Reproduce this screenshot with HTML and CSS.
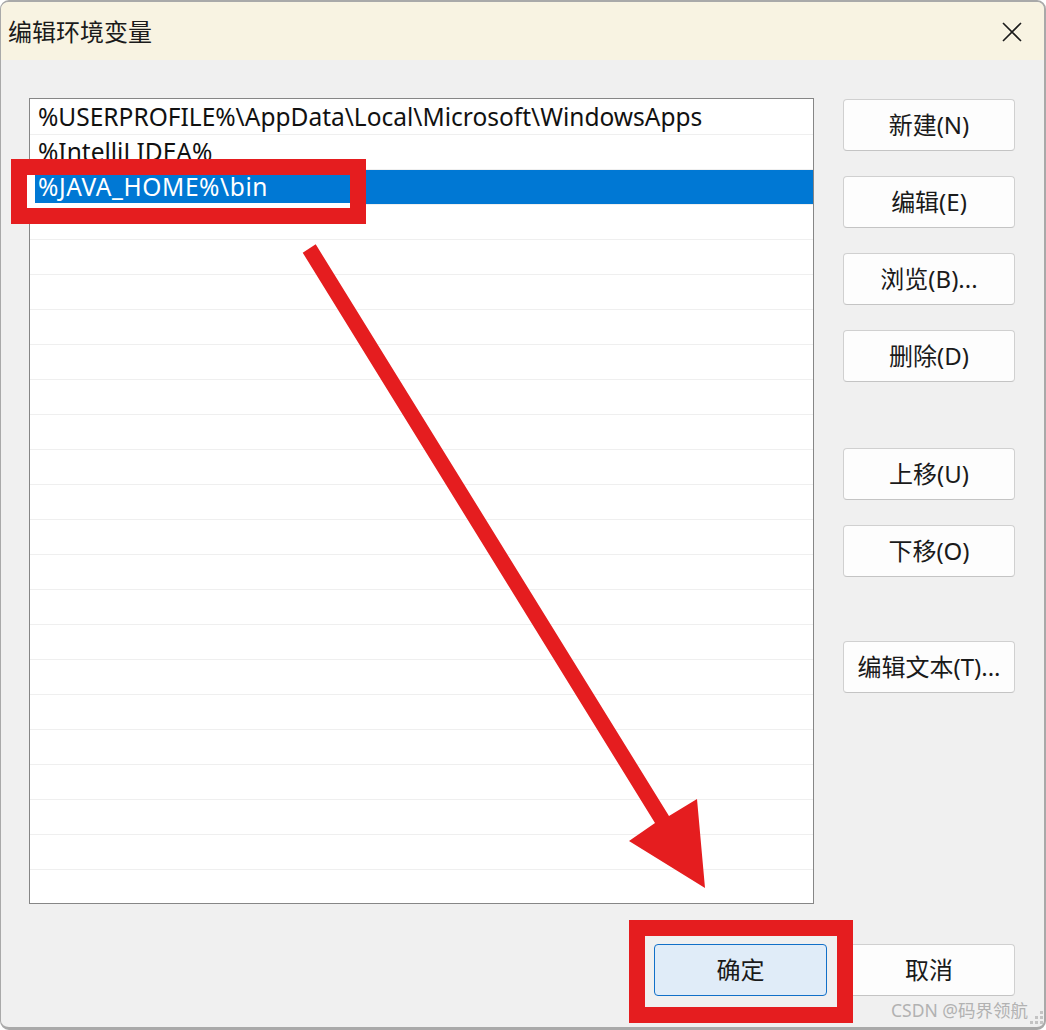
FILE: index.html
```html
<!DOCTYPE html>
<html lang="zh-CN">
<head>
<meta charset="utf-8">
<title>编辑环境变量</title>
<link rel="stylesheet" href="styles.css">
</head>
<body>
<div class="window">
  <div class="titlebar">
    <span class="title">编辑环境变量</span>
    <span class="close">
      <svg width="20" height="20" viewBox="0 0 20 20"><path d="M1 1L19 19M19 1L1 19" stroke="#1b1b1b" stroke-width="1.6" fill="none"/></svg>
    </span>
  </div>
  <div class="content">
    <div class="main">
      <div class="list">
        <div class="row">%USERPROFILE%\AppData\Local\Microsoft\WindowsApps</div>
        <div class="row">%IntelliJ IDEA%</div>
        <div class="row selected"><span class="sel-text">%JAVA_HOME%\bin</span></div>
        <div class="row"></div><div class="row"></div><div class="row"></div><div class="row"></div>
        <div class="row"></div><div class="row"></div><div class="row"></div><div class="row"></div>
        <div class="row"></div><div class="row"></div><div class="row"></div><div class="row"></div>
        <div class="row"></div><div class="row"></div><div class="row"></div><div class="row"></div>
        <div class="row"></div><div class="row"></div><div class="row"></div><div class="row last"></div>
      </div>
      <div class="side">
        <button class="btn">新建(N)</button>
        <button class="btn">编辑(E)</button>
        <button class="btn">浏览(B)...</button>
        <button class="btn">删除(D)</button>
        <button class="btn group">上移(U)</button>
        <button class="btn">下移(O)</button>
        <button class="btn group2">编辑文本(T)...</button>
      </div>
    </div>
    <div class="footer">
      <button class="btn primary">确定</button>
      <button class="btn">取消</button>
    </div>
  </div>

  <div class="mark mark-row"></div>
  <div class="mark mark-ok"></div>
  <svg class="arrow" width="1046" height="1030" viewBox="0 0 1046 1030">
    <polygon points="302.7,252.7 315.7,244.3 669,816 697,799 705,888 629,841 655,823" fill="#e51d1f"/>
  </svg>
  <div class="watermark">CSDN @码界领航</div>
  <svg class="grip" width="16" height="16" viewBox="0 0 16 16">
    <rect x="12" y="2" width="3" height="3" fill="#c4c4c4"/>
    <rect x="12" y="7" width="3" height="3" fill="#c4c4c4"/>
    <rect x="7" y="7" width="3" height="3" fill="#c4c4c4"/>
    <rect x="12" y="12" width="3" height="3" fill="#c4c4c4"/>
    <rect x="7" y="12" width="3" height="3" fill="#c4c4c4"/>
    <rect x="2" y="12" width="3" height="3" fill="#c4c4c4"/>
  </svg>
</div>
</body>
</html>
```

FILE: styles.css
```css
* { box-sizing: border-box; }
html, body { margin: 0; padding: 0; background: #ffffff; }
body {
  width: 1046px;
  height: 1030px;
  overflow: hidden;
  font-family: "Noto Sans", "Noto Sans CJK SC", sans-serif;
  color: #1a1a1a;
}
.window {
  position: relative;
  width: 1046px;
  height: 1030px;
  background: #f0f0f0;
  border-style: solid;
  border-color: #a9a9a9;
  border-width: 2px 2px 3px 1px;
  border-radius: 9px;
  overflow: hidden;
}
.titlebar {
  height: 58px;
  background: #f8f3e2;
  display: flex;
  align-items: center;
  justify-content: space-between;
  padding: 0 22px 0 7px;
}
.title {
  font-family: "Noto Sans CJK SC", sans-serif;
  font-size: 24px;
  line-height: 30px;
  color: #1b1b1b;
}
.close { display: flex; width: 20px; height: 20px; margin-top: 2px; }
.content { padding: 38px 29px 0 28px; }
.main { display: flex; gap: 29px; align-items: flex-start; }
.list {
  width: 785px;
  height: 806px;
  background: #ffffff;
  border: 1px solid #868686;
  padding-top: 1px;
  overflow: hidden;
}
.row {
  height: 35px;
  border-bottom: 1px solid #efefef;
  padding-left: 8px;
  font-size: 24.5px;
  line-height: 34px;
  white-space: nowrap;
  color: #111111;
}
.row.last { border-bottom: 0; }
.row.selected {
  background: #0078d4;
  margin-left: 5px;
  padding-left: 3px;
  color: #ffffff;
  letter-spacing: 0.6px;
}
.side {
  width: 172px;
  padding-top: 1px;
  display: flex;
  flex-direction: column;
  gap: 25px;
}
.btn {
  height: 52px;
  width: 172px;
  background: #fdfdfd;
  border: 1px solid #d0d0d0;
  border-bottom-color: #c4c4c4;
  border-radius: 4px;
  font-family: "Noto Sans", "Noto Sans CJK SC", sans-serif;
  font-size: 24px;
  color: #1a1a1a;
  padding: 0;
  line-height: 48px;
}
.btn.group { margin-top: 41px; }
.btn.group2 { margin-top: 39px; }
.footer {
  margin-top: 40px;
  display: flex;
  justify-content: flex-end;
  gap: 16px;
}
.btn.primary {
  width: 173px;
  background: #e0ecf8;
  border-color: #1270c8;
}
.mark {
  position: absolute;
  border: 16px solid #e51d1f;
}
.mark-row {
  left: 10px;
  top: 157px;
  width: 355px;
  height: 65px;
  box-shadow: inset 8px -5px 0 #ffffff;
}
.mark-ok {
  left: 628px;
  top: 918px;
  width: 224px;
  height: 103px;
}
.arrow {
  position: absolute;
  left: -1px;
  top: -2px;
}
.watermark {
  position: absolute;
  right: 16px;
  top: 996px;
  font-family: "Noto Sans", "Noto Sans CJK SC", sans-serif;
  font-size: 17.5px;
  line-height: 24px;
  color: #b2b2b2;
  white-space: nowrap;
}
.grip {
  position: absolute;
  right: 0px;
  top: 1007px;
}
```
